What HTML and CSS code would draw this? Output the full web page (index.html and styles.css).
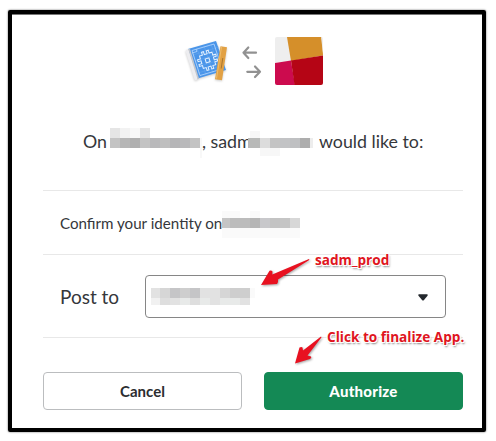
FILE: index.html
```html
<!DOCTYPE html>
<html lang="en">
<head>
<meta charset="utf-8">
<title>Authorize app</title>
<link rel="stylesheet" href="styles.css">
</head>
<body>
<main class="card">
  <div class="logos">
    <svg class="app-logo" width="48" height="48" viewBox="0 0 48 48">
      <path d="M5 12L33 4L43 33L13 42Z" fill="#4a95e9"/>
      <path d="M2.500 14Q3 12.300 5.500 12L15 41Q13 44.500 11.500 42.500Z" fill="#ededf0"/>
      <path d="M5.300 12.200L7 12L16 41.500L14.500 42Z" fill="#c5c7cc"/>
      <g fill="none" stroke="#69a9ef" stroke-width=".5"><path d="M10 18L36 10M12 24L38 16M14 30L40 22M15 36L41 28M14 11L23 38M21 9L30 36M28 7L37 34"/></g>
      <path d="M9 13.500L31 7L39 32L17 38.500ZM9 16L14 14.500L13.300 12.200" fill="none" stroke="#b9d9ff" stroke-width=".8"/>
      <g transform="rotate(-17 24 23)">
        <path d="M21 14h2v3h3v-3h2v3h3v3h3v2h-3v3h3v2h-3v3h-3v3h-2v-3h-3v3h-2v-3h-3v-3h-3v-2h3v-3h-3v-2h3v-3h3z" fill="none" stroke="#e4f1ff" stroke-width="1"/>
        <rect x="22.500" y="21.500" width="4" height="4" fill="none" stroke="#e4f1ff" stroke-width="1"/>
      </g>
      <path d="M37.500 9.200L44 10.200L39 43.200L32 42.200Z" fill="#e2a144"/>
      <path d="M38.500 10L33.500 41.500" stroke="#efbd6c" stroke-width="1"/>
      <path d="M39.800 21L38.200 31.500" stroke="#a8752f" stroke-width="1"/>
    </svg>
    <svg class="exchange" width="20" height="36" viewBox="0 0 20 36">
      <g fill="none" stroke="#919191" stroke-width="2.200" stroke-linecap="round" stroke-linejoin="round">
        <path d="M14 9.700H1.500M6.300 4.500L1.500 9.700L6.300 15"/>
        <path d="M5.300 28.800H18M13 23.500L18 28.800L13 34"/>
      </g>
    </svg>
    <svg class="team-logo" width="48" height="48" viewBox="0 0 48 48">
      <path d="M0 0H13L17 24L0 26Z" fill="#eee"/>
      <path d="M12 0H47L48 18.500L16 24Z" fill="#d58f2a"/>
      <path d="M0 26L16 23.500L20 48H0Z" fill="#cc0b4e"/>
      <path d="M16 23.500L48 18.500V48H19.500Z" fill="#b50515"/>
      <path d="M46 0H48V16Z" fill="#eee"/>
    </svg>
  </div>

  <h1 class="request">
    <span class="on">On</span>
    <svg class="mask mask-team" width="92" height="30" viewBox="0 0 92 30" shape-rendering="crispEdges">
      <path fill="#e5e5e5" d="M0 0h10v10H0zM30 0h10v10H30z"/><path fill="#f2f2f2" d="M10 0h10v10H10z"/><path fill="#f8f8f8" d="M20 0h10v10H20z"/>
      <path fill="#c3c3c3" d="M0 10h10v10H0zM30 10h10v10H30zM80 10h10v10H80z"/><path fill="#b6b6b6" d="M10 10h10v10H10z"/><path fill="#afafaf" d="M20 10h10v10H20z"/>
      <path fill="#b9b9bb" d="M40 10h10v10H40zM70 10h10v10H70z"/><path fill="#bfbfbf" d="M50 10h10v10H50z"/><path fill="#b5b5b7" d="M60 10h10v10H60z"/><path fill="#f8f8f8" d="M90 10h2v20h-2z"/>
    </svg>
    <span class="app">, sadm</span>
    <svg class="mask mask-app" width="65" height="26" viewBox="0 0 65 26" shape-rendering="crispEdges">
      <path fill="#f7f7f7" d="M2 1h10v7H2zM12 18h20v8H12z"/><path fill="#b8b9b8" d="M0 8h12v10H0z"/><path fill="#dcdcdc" d="M12 8h10v10H12z"/><path fill="#c4c4c4" d="M22 8h10v10H22z"/><path fill="#c2c3c5" d="M32 8h10v10H32z"/><path fill="#bfc0c2" d="M42 8h10v10H42z"/><path fill="#adadad" d="M52 8h10v10H52z"/><path fill="#ededed" d="M62 8h3v10h-3z"/>
    </svg>
    <span class="wants">would like to:</span>
  </h1>

  <div class="scope">
    <span class="scope-text">Confirm your identity on</span>
    <svg class="mask mask-scope" width="78" height="27" viewBox="0 0 78 27" shape-rendering="crispEdges">
      <path fill="#fafafa" d="M0 0h18v7H0zM28 0h10v7H28zM0 17h78v10H0z"/>
      <path fill="#c5c5c5" d="M0 7h8v10H0zM58 7h10v10H58z"/><path fill="#bcbcbc" d="M8 7h20v10H8z"/><path fill="#b5b5b5" d="M28 7h10v10H28z"/><path fill="#c8c8cb" d="M38 7h10v10H38z"/><path fill="#c3c3c3" d="M48 7h10v10H48z"/><path fill="#d7d7d7" d="M68 7h10v10H68z"/>
    </svg>
  </div>

  <div class="post">
    <span class="post-label">Post to</span>
    <div class="select">
      <svg width="104" height="17" viewBox="0 0 104 17" shape-rendering="crispEdges">
        <path fill="#e2e2e2" d="M0 0h9v10H0zM49 0h20v10H49z"/><path fill="#d6d6d6" d="M9 0h10v10H9zM69 0h10v10H69z"/><path fill="#c5c5c7" d="M19 0h10v10H19zM39 0h10v10H39z"/><path fill="#cecece" d="M29 0h10v10H29zM79 0h20v10H79z"/><path fill="#fafafa" d="M99 0h5v10h-5z"/>
        <path fill="#f1f1f1" d="M0 10h9v7H0z"/><path fill="#dedede" d="M9 10h10v7H9zM39 10h10v7H39z"/><path fill="#e2e2e2" d="M19 10h10v7H19zM59 10h10v7H59zM89 10h10v7H89z"/><path fill="#e8eae9" d="M29 10h10v7H29zM49 10h10v7H49zM69 10h20v7H69z"/>
      </svg>
      <svg class="caret" width="10" height="7" viewBox="0 0 10 7"><path d="M1 .3H9Q10.200.6 9.500 1.800L6 6Q5 7 4 6L.5 1.800Q-.2.6 1 .3Z" fill="#24282d"/></svg>
    </div>
  </div>

  <div class="actions">
    <button class="button cancel" type="button">Cancel</button>
    <button class="button authorize" type="button">Authorize</button>
  </div>
</main>

<div class="note note-channel">
  <svg width="54" height="32" viewBox="0 0 54 32"><path d="M49 2Q50 2.800 48.500 3.500L18 22.500Q18.500 24.500 17 27L1 28L9.500 13.800Q11.500 13.200 12.500 14.500L12.300 17.500Z" fill="#e81120"/></svg>
  <span>sadm_prod</span>
</div>
<div class="note note-finish">
  <svg width="30" height="32" viewBox="0 0 30 32"><path d="M27 1.500Q28 2 27 3L13.500 20.500L17 21.500Q18 22.500 16 24L1 28.500L5.500 12.500Q7.500 11.500 8.500 12.500L9 15.500Z" fill="#e81120"/></svg>
  <span>Click to finalize App.</span>
</div>
</body>
</html>
```
FILE: styles.css
```css
* { box-sizing: border-box; }

body {
  margin: 0;
  height: 441px;
  padding: 10px 10px 9px 8px;
  background: #fff;
  color: #35373b;
  font-family: Lato, "Liberation Sans", sans-serif;
  overflow: hidden;
}

.card {
  width: 478px;
  height: 422px;
  padding: 23px 19px 0 31px;
  border: 4px solid #000;
  border-radius: 2px;
  box-shadow: 0 0 2px rgba(0, 0, 0, .65), inset 0 1px 0 #777;
}

.logos { display: flex; height: 48px; padding-left: 140px; }
.app-logo { filter: drop-shadow(0 1px 1px rgba(0, 0, 0, .2)); }
.exchange { margin: 6px 13px 0 11px; }
.team-logo { border-radius: 2px; }

.request {
  display: flex;
  align-items: flex-start;
  height: 105px;
  margin: 0;
  padding: 43px 0 0 40px;
  font-size: 17.8px;
  font-weight: 400;
  line-height: 26px;
  white-space: nowrap;
}
.mask { flex: none; }
.on { width: 27px; }
.app { width: 46px; }
.mask-app { margin-top: 2px; }
.wants { margin-left: 6px; }

.scope {
  display: flex;
  align-items: flex-start;
  height: 64px;
  padding: 20px 0 0 17px;
  border-top: 1px solid #e8e8e8;
  font-size: 15.15px;
  line-height: 24px;
  white-space: nowrap;
}
.scope-text { width: 162px; }

.post {
  display: flex;
  height: 84px;
  padding: 20px 17px 0 17px;
  border-top: 1px solid #e8e8e8;
  border-bottom: 1px solid #e8e8e8;
}
.post-label { width: 85px; font-size: 19px; line-height: 44px; }
.select {
  display: flex;
  flex: 1;
  justify-content: space-between;
  height: 43px;
  padding: 12px 17px 0 5px;
  border: 1px solid #868686;
  border-radius: 4px;
}
.caret { margin-top: 6px; }

.actions { display: flex; gap: 22px; padding-top: 34px; }
.button {
  flex: 1;
  height: 38px;
  padding: 0;
  border: 1px solid #bbbdbf;
  border-radius: 4px;
  background: #fff;
  color: #2c2d30;
  font: 700 15px/36px Lato, sans-serif;
}
.authorize {
  border-color: #148955;
  background: #148955;
  color: #fff;
  font-weight: 900;
  letter-spacing: .25px;
}

.note {
  position: absolute;
  display: flex;
  color: #e01420;
  font: 700 13.6px/20px "Open Sans", sans-serif;
  white-space: nowrap;
  text-shadow: -1px -1px #fff, 1px -1px #fff, -1px 1px #fff, 1px 1px #fff, 1px 2px 2px rgba(0, 0, 0, .5);
}
.note svg { flex: none; filter: drop-shadow(1px 1px 1px rgba(0, 0, 0, .35)); }
.note-channel { left: 260px; top: 257px; }
.note-channel span { margin: -7px 0 0 1px; }
.note-finish { left: 294px; top: 335px; }
.note-finish span { margin: -8px 0 0 3px; }
```
